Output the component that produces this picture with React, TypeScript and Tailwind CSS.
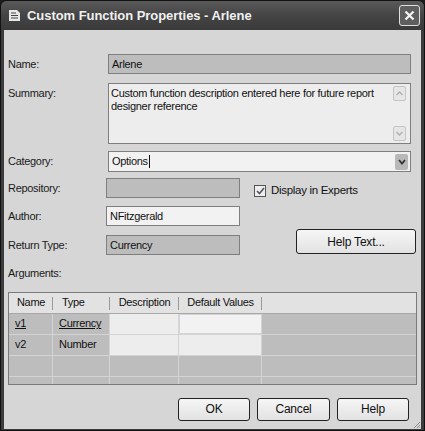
import React from "react";

const font = { fontFamily: '"Liberation Sans", Arial, sans-serif' };

function Label({ children }: { children: React.ReactNode }) {
  return <div className="w-[98px] shrink-0 pt-[2px] text-[11px] text-[#1a1a1a]">{children}</div>;
}

function Field({
  value,
  gray = false,
  className = "",
}: {
  value?: string;
  gray?: boolean;
  className?: string;
}) {
  return (
    <div
      className={`h-[20px] border border-[#7f7f7f] px-[3px] flex items-center text-[11px] text-[#111] ${
        gray ? "bg-[#bdbdbd]" : "bg-[#f2f2f2]"
      } ${className}`}
    >
      {value}
    </div>
  );
}

function ScrollBtn({ dir }: { dir: "up" | "down" }) {
  return (
    <div className="w-[13px] h-[15px] rounded-[2px] border border-[#c4c4c4] bg-[#e6e6e6] flex items-center justify-center">
      <svg width="7" height="5" viewBox="0 0 7 5">
        <path
          d={dir === "up" ? "M0.5 4 L3.5 1 L6.5 4" : "M0.5 1 L3.5 4 L6.5 1"}
          fill="none"
          stroke="#b0b0b0"
          strokeWidth="1.4"
        />
      </svg>
    </div>
  );
}

function Button({ children, className = "" }: { children: React.ReactNode; className?: string }) {
  return (
    <button
      className={`rounded-[3px] border border-[#222] bg-gradient-to-b from-[#f6f6f6] to-[#e2e2e2] text-[12px] tracking-[-0.2px] text-[#111] flex items-center justify-center ${className}`}
    >
      {children}
    </button>
  );
}

export default function App() {
  return (
    <div style={font} className="w-[425px] h-[431px] bg-[#1c1c1c] overflow-hidden">
      <div className="w-full h-full flex flex-col rounded-t-[6px] bg-[#3c3c3c] border border-[#111]">
        {/* title bar */}
        <div className="h-[29px] shrink-0 flex items-center bg-gradient-to-b from-[#5a5a5a] via-[#444] to-[#3a3a3a] rounded-t-[6px] pl-[7px] pr-[4px]">
          <svg width="13" height="13" viewBox="0 0 13 13" className="shrink-0">
            <path d="M1 1 H9 L12 4 V12 H1 Z" fill="#e8e8e8" />
            <path d="M3 4 H8 M3 6.5 H10 M3 9 H10" stroke="#444" strokeWidth="1" />
          </svg>
          <div className="ml-[6px] text-[13px] font-bold text-[#f0f0f0] tracking-[-0.05px]">
            Custom Function Properties - Arlene
          </div>
          <div className="ml-auto w-[21px] h-[21px] rounded-[3px] border border-[#e0e0e0] bg-[#5e5e5e] flex items-center justify-center">
            <svg width="11" height="11" viewBox="0 0 11 11">
              <path d="M1.5 1.5 L9.5 9.5 M9.5 1.5 L1.5 9.5" stroke="#f4f4f4" strokeWidth="2.2" />
            </svg>
          </div>
        </div>

        {/* body */}
        <div className="flex-1 mx-[3px] mb-[3px] bg-[#d6d6d6] flex flex-col px-[4px] pt-[24px] tracking-[-0.3px]">
          <div className="flex">
            <Label>Name:</Label>
            <Field value="Arlene" gray className="ml-[2px] w-[303px]" />
          </div>

          <div className="flex mt-[9px]">
            <Label>Summary:</Label>
            <div className="ml-[2px] w-[303px] h-[61px] border border-[#7f7f7f] bg-[#ededed] flex">
              <div className="flex-1 px-[2px] pt-[3px] text-[11px] leading-[13px] text-[#111]">
                Custom function description entered here for future report designer reference
              </div>
              <div className="w-[15px] flex flex-col justify-between py-[2px] mr-[2px]">
                <ScrollBtn dir="up" />
                <ScrollBtn dir="down" />
              </div>
            </div>
          </div>

          <div className="flex mt-[7px]">
            <Label>Category:</Label>
            <div className="ml-[2px] w-[303px] h-[21px] border border-[#7f7f7f] bg-[#f2f2f2] flex items-center">
              <div className="flex-1 px-[3px] text-[11px] text-[#111] flex items-center">
                Options<span className="inline-block w-[1px] h-[13px] bg-[#111] ml-[1px]" />
              </div>
              <div className="w-[13px] h-[16px] mr-[2px] rounded-[2px] bg-[#b8b8b8] flex items-center justify-center">
                <svg width="8" height="6" viewBox="0 0 8 6">
                  <path d="M1 1 L4 4.5 L7 1" fill="none" stroke="#333" strokeWidth="1.8" />
                </svg>
              </div>
            </div>
          </div>

          <div className="flex mt-[6px]">
            <div className="flex flex-col gap-[8px]">
              <div className="flex">
                <Label>Repository:</Label>
                <Field gray className="w-[134px]" />
              </div>
              <div className="flex">
                <Label>Author:</Label>
                <Field value="NFitzgerald" className="w-[134px]" />
              </div>
              <div className="flex mt-[1px]">
                <Label>Return Type:</Label>
                <Field value="Currency" gray className="w-[134px]" />
              </div>
            </div>
            <div className="flex-1 flex flex-col justify-between pb-[1px]">
              <div className="flex items-center mt-[4px] ml-[14px]">
                <div className="w-[12px] h-[12px] border border-[#555] bg-[#eeeeee] flex items-center justify-center">
                  <svg width="9" height="8" viewBox="0 0 9 8">
                    <path d="M1 4 L3.5 6.5 L8 1" fill="none" stroke="#555" strokeWidth="1.6" />
                  </svg>
                </div>
                <span className="ml-[5px] text-[11.5px] tracking-[-0.3px] text-[#111]">Display in Experts</span>
              </div>
              <Button className="ml-auto mr-[1px] w-[120px] h-[25px]">Help Text...</Button>
            </div>
          </div>

          <div className="mt-[10px] text-[11px] text-[#1a1a1a]">Arguments:</div>

          {/* arguments grid */}
          <div className="mt-[10px] h-[93px] border border-[#7a7a7a] bg-[#bdbdbd] overflow-hidden text-[11px] text-[#111]">
            <div className="h-[21px] flex bg-[#e2e2e2] border-b border-[#a8a8a8]">
              {[
                ["Name", "w-[44px] justify-center"],
                ["Type", "w-[57px] pl-[9px]"],
                ["Description", "w-[69px] justify-center"],
                ["Default Values", "w-[83px] justify-center"],
              ].map(([t, c]) => (
                <div key={t} className={`flex items-center ${c} relative`}>
                  {t}
                  <span className="absolute right-0 top-[4px] h-[13px] w-[1px] bg-[#9a9a9a]" />
                </div>
              ))}
            </div>
            {[
              ["v1", "Currency", true],
              ["v2", "Number", false],
              ["", "", false],
              ["", "", false],
            ].map(([n, t, u], i) => (
              <div key={i} className="h-[21px] flex border-b border-[#d4d4d4]">
                <div className={`w-[44px] pl-[6px] flex items-center border-r border-[#d4d4d4] ${u ? "underline" : ""}`}>
                  {n}
                </div>
                <div className={`w-[57px] pl-[6px] flex items-center border-r border-[#d4d4d4] ${u ? "underline" : ""}`}>
                  {t}
                </div>
                <div className={`w-[69px] border-r border-[#d4d4d4] ${i < 2 ? "bg-[#ededed]" : ""}`} />
                <div
                  className={`w-[83px] border-r border-[#d4d4d4] ${
                    i === 0 ? "bg-[#f2f2f2] border border-[#c8c8c8]" : i === 1 ? "bg-[#ededed]" : ""
                  }`}
                />
                <div className="flex-1" />
              </div>
            ))}
          </div>

          <div className="mt-[13px] flex justify-end gap-[7px] pr-[8px]">
            <Button className="w-[72px] h-[23px]">OK</Button>
            <Button className="w-[73px] h-[23px]">Cancel</Button>
            <Button className="w-[72px] h-[23px]">Help</Button>
          </div>

          <div className="flex-1 flex items-end justify-end -mr-[4px]">
            <svg width="8" height="8" viewBox="0 0 8 8">
              <path d="M7 1 L1 7 M7 4 L4 7 M7 6.5 L6.5 7" stroke="#8a8a8a" strokeWidth="1" />
            </svg>
          </div>
        </div>
      </div>
    </div>
  );
}
